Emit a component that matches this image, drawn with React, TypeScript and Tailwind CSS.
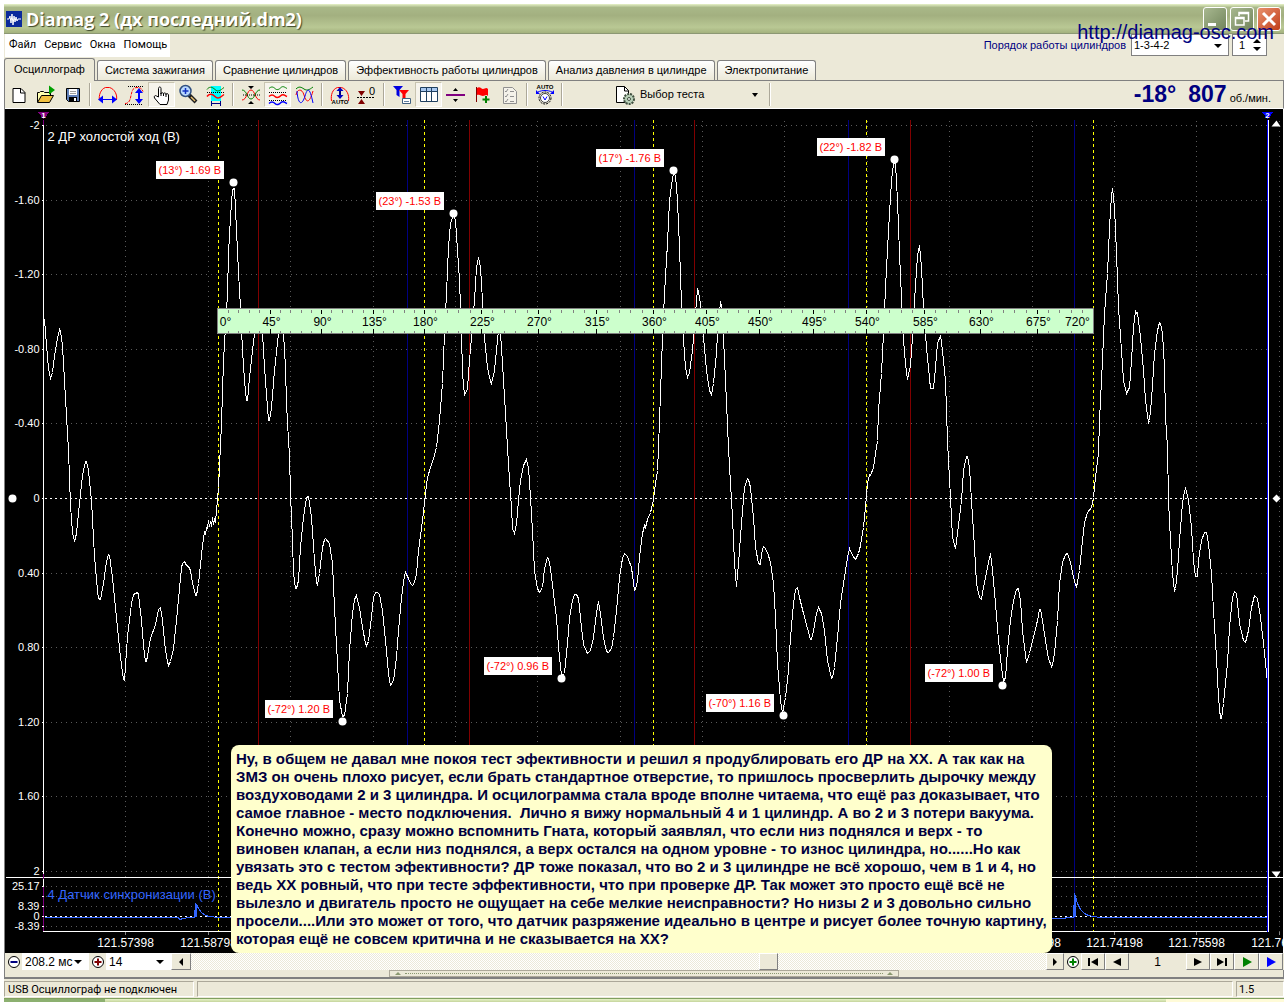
import React, { useState } from 'react';
import type { ReactNode } from 'react';

const TABS = [
  'Осциллограф',
  'Система зажигания',
  'Сравнение цилиндров',
  'Эффективность работы цилиндров',
  'Анализ давления в цилиндре',
  'Электропитание',
];

const MENU = ['Файл', 'Сервис', 'Окна', 'Помощь'];

const NOTE = `Ну, в общем не давал мне покоя тест эфективности и решил я продублировать его ДР на ХХ. А так как на
ЗМЗ он очень плохо рисует, если брать стандартное отверстие, то пришлось просверлить дырочку между
воздуховодами 2 и 3 цилиндра. И осцилограмма стала вроде вполне читаема, что ещё раз доказывает, что
самое главное - место подключения.  Лично я вижу нормальный 4 и 1 цилиндр. А во 2 и 3 потери вакуума.
Конечно можно, сразу можно вспомнить Гната, который заявлял, что если низ поднялся и верх - то
виновен клапан, а если низ поднялся, а верх остался на одном уровне - то износ цилиндра, но......Но как
увязать это с тестом эфективности? ДР тоже показал, что во 2 и 3 цилиндре не всё хорошо, чем в 1 и 4, но
ведь ХХ ровный, что при тесте эффективности, что при проверке ДР. Так может это просто ещё всё не
вылезло и двигатель просто не ощущает на себе мелкие неисправности? Но низы 2 и 3 довольно сильно
просели....Или это может от того, что датчик разряжение идеально в центре и рисует более точную картину,
которая ещё не совсем критична и не сказывается на ХХ?`;

// vacuum sensor trace, channel 2
const VACUUM =
  '44,319 46,345 48,368 50,378 52,372 54,355 57,338 59,329 60,331 62,345 65,398 68,450 70,505 72,532 74,541 76,533 79,503 82,475 85,461 86,461 88,470 91,500 94,556 97,590 98,598 100,599 103,583 106,561 108,554 109,555 112,577 116,617 120,657 122,672 123,679 124,680 127,636 131,603 133,594 137,592 138,594 141,620 143,645 145,661 146,661 150,638 155,624 158,609 160,607 162,620 165,650 167,661 168,665 170,661 173,648 176,620 181,567 182,563 184,561 186,565 188,566 190,570 192,582 195,595 196,595 198,583 202,545 204,531 205,534 206,527 207,528 208,520 209,526 210,521 211,526 212,517 213,524 214,519 215,522 216,510 218,487 221,423 223,360 227,293 228,253 230,217 232,189 234,188 236,230 238,272 240,307 242,350 244,380 246,400 247,400 249,377 252,350 254,333 258,318 262,333 264,367 267,407 268,420 269,420 271,407 274,370 278,333 280,325 283,333 285,367 286,403 288,440 289,455 290,493 292,540 293,573 295,588 296,588 298,580 300,547 303,517 306,497 308,496 311,517 314,560 316,582 317,585 319,573 322,547 324,539 325,538 329,543 332,563 334,607 337,663 339,700 342,716 344,715 347,693 349,650 352,613 354,599 356,595 359,607 362,627 365,643 366,645 368,641 371,617 373,597 375,592 377,592 379,594 382,610 385,640 388,673 390,685 393,680 396,657 398,630 401,597 404,575 405,572 408,578 410,583 412,585 414,582 416,573 418,550 422,520 425,493 427,477 430,467 433,458 436,447 439,420 442,383 444,333 446,293 448,247 450,223 453,214 455,220 457,250 459,280 461,333 462,373 464,395 467,388 469,360 471,337 474,300 476,267 478,257 480,267 482,300 484,337 487,367 490,381 491,383 494,370 497,340 499,320 500,333 502,363 505,413 507,447 509,480 511,507 512,528 514,533 516,523 518,500 520,480 523,465 526,459 528,467 530,497 532,530 534,570 537,588 539,592 542,587 544,568 547,557 548,558 550,568 553,593 556,617 558,647 561,675 564,673 567,643 569,617 572,600 574,594 576,594 578,598 581,627 583,644 587,653 590,650 593,637 596,613 598,601 600,613 603,637 606,651 608,652 611,648 613,637 616,610 619,577 622,558 624,553 627,556 631,567 634,590 635,589 637,580 639,557 642,533 644,525 645,527 647,519 650,512 653,500 654,490 657,470 658,447 660,393 662,337 664,293 667,243 669,200 672,178 673,173 675,175 677,200 679,247 681,303 683,340 685,367 687,377 689,372 692,350 695,313 697,289 698,291 700,303 703,337 706,370 709,390 711,394 713,383 716,353 717,333 720,301 722,310 723,337 725,380 728,447 730,483 732,517 734,563 736,586 738,563 741,523 744,487 747,478 748,479 750,487 753,517 755,547 758,563 760,564 761,553 763,546 764,547 767,552 770,562 773,583 775,617 777,663 780,700 782,713 785,697 788,670 790,637 793,603 795,589 797,587 799,597 803,613 807,628 810,639 811,639 813,630 816,613 818,607 821,613 824,630 827,660 831,678 832,677 834,667 837,637 840,603 843,583 847,557 849,548 852,555 855,559 858,553 860,545 863,527 865,507 867,483 869,474 870,475 873,467 875,453 877,440 878,410 881,373 883,333 885,287 888,230 891,180 893,163 895,163 897,200 899,253 901,297 903,340 905,363 907,379 910,365 912,337 914,300 917,255 919,245 921,267 923,307 926,347 928,367 930,388 933,388 935,367 937,343 940,335 942,350 945,380 947,440 948,460 950,497 952,537 955,548 957,533 961,500 963,470 966,456 967,456 969,467 971,500 974,547 976,583 979,597 981,599 983,587 987,567 990,553 992,570 995,603 998,640 1001,667 1003,681 1005,677 1007,650 1010,620 1013,600 1016,589 1018,588 1020,600 1022,630 1026,662 1029,653 1033,637 1037,620 1039,609 1040,609 1042,620 1045,640 1048,658 1051,666 1052,664 1054,653 1057,620 1059,583 1062,562 1065,554 1067,553 1070,562 1073,577 1076,587 1079,570 1082,540 1084,522 1087,512 1091,507 1093,497 1095,477 1098,453 1099,420 1102,360 1104,313 1107,273 1109,227 1111,195 1112,188 1114,207 1116,253 1118,307 1121,350 1123,380 1126,393 1129,387 1131,360 1133,327 1135,311 1136,313 1137,312 1140,337 1143,370 1145,400 1148,422 1149,420 1151,400 1154,353 1157,330 1159,322 1160,323 1162,333 1164,367 1165,417 1167,447 1168,500 1170,540 1172,573 1174,591 1175,588 1177,570 1179,540 1182,503 1184,491 1185,488 1186,491 1188,500 1191,527 1193,560 1195,576 1197,576 1198,560 1201,540 1204,532 1206,532 1208,543 1211,573 1213,610 1216,657 1218,697 1220,718 1221,718 1223,703 1227,663 1229,627 1232,597 1234,591 1236,593 1237,602 1239,623 1243,640 1245,642 1248,630 1251,607 1254,595 1257,598 1260,617 1263,643 1267,682';

// camshaft sync sensor trace, channel 4
const SYNC =
  '44,917 178,917 179,919 183,918 188,917 194,917 195,903 196,904 198,908 201,912 205,915 209,916 218,917 1046,917 1057,918 1064,918 1066,917 1073,917 1074,893 1075,896 1077,903 1080,909 1084,913 1088,915 1093,916 1100,917 1267,917';

const V_TICKS = [
  ['-2', 125],
  ['-1.60', 200],
  ['-1.20', 274],
  ['-0.80', 349],
  ['-0.40', 423],
  ['0', 498],
  ['0.40', 573],
  ['0.80', 647],
  ['1.20', 722],
  ['1.60', 796],
  ['2', 871],
  ['25.17', 886],
  ['', 896],
  ['8.39', 906],
  ['0', 916],
  ['-8.39', 926],
] as const;

// ticks that the note covers carry no label
const T_TICKS = [
  ['121.57398', 125],
  ['121.58798', 208],
  ['', 290],
  ['', 373],
  ['', 455],
  ['', 537],
  ['', 620],
  ['', 702],
  ['', 784],
  ['', 867],
  ['', 949],
  ['121.72798', 1032],
  ['121.74198', 1114],
  ['121.75598', 1196],
  ['121.76998', 1279],
] as const;

const STROKES = [218, 424, 653, 866, 1093];
const RED_LINES = [258, 469, 694, 910];
const BLUE_LINES = [407, 634, 848, 1074];

const RULER = [217, 270, 321, 373, 424, 481, 538, 596, 653, 706, 759, 813, 866, 924, 980, 1037, 1093];

const PEAKS = [
  { x: 233, y: 182, label: '(13°) -1.69 В' },
  { x: 453, y: 213, label: '(23°) -1.53 В' },
  { x: 673, y: 170, label: '(17°) -1.76 В' },
  { x: 894, y: 159, label: '(22°) -1.82 В' },
  { x: 342, y: 721, label: '(-72°) 1.20 В' },
  { x: 561, y: 678, label: '(-72°) 0.96 В' },
  { x: 783, y: 715, label: '(-70°) 1.16 В' },
  { x: 1002, y: 685, label: '(-72°) 1.00 В' },
];

function Ruler() {
  return (
    <g>
      <rect x="217" y="308" width="876" height="25" fill="#ccffcc" stroke="#808080" />
      {RULER.slice(0, -1).map((x, i) => {
        const step = (RULER[i + 1] - x) / 5;
        return (
          <g key={x}>
            {i > 0 && <path d={`M${x} 309v4M${x} 328v5`} stroke="#000" />}
            {[1, 2, 3, 4].map((n) => {
              const mx = Math.round(x + step * n);
              return <path key={n} d={`M${mx} 309v3M${mx} 330v3`} stroke="#808080" />;
            })}
          </g>
        );
      })}
      {RULER.map((x, i) => (
        <text
          key={x}
          x={i === 0 ? 225 : i === 16 ? 1077 : x + 1}
          y="325"
          textAnchor="middle"
          fontSize="12"
          fill="#000"
        >
          {i * 45}°
        </text>
      ))}
    </g>
  );
}

function Chart() {
  return (
    <svg
      viewBox="5 109 1278 844"
      className="block w-full bg-black"
      fontFamily="'Liberation Sans', Arial, sans-serif"
      shapeRendering="crispEdges"
      role="img"
      aria-label="Осциллограмма"
    >
      <g transform="translate(.5 .5)" fill="none" strokeWidth="1">
        <g stroke="#5a5a5a" strokeDasharray="1 4">
          {V_TICKS.filter(([label]) => label !== '0').map(([, y]) => (
            <path key={y} d={`M45 ${y}H1267`} />
          ))}
          {T_TICKS.map(([, x]) => (
            <path key={x} d={`M${x} 120V931`} />
          ))}
        </g>

        {RED_LINES.map((x) => (
          <path key={x} d={`M${x} 119V931`} stroke="#800000" />
        ))}
        {BLUE_LINES.map((x) => (
          <path key={x} d={`M${x} 119V931`} stroke="#000080" />
        ))}
        {STROKES.map((x) => (
          <path key={x} d={`M${x} 119V931`} stroke="#ffff00" strokeDasharray="3 3" />
        ))}
        <path d="M44 498H1267M44 916H1267" stroke="#fff" strokeDasharray="2 3" />

        <polyline points={VACUUM} stroke="#fff" />
        <polyline points={SYNC} stroke="#3366ff" />
        <path d="M195 905v11M1074 895v21" stroke="#3366ff" strokeWidth="2" />

        <path d="M5 877H1282M43 119V931H1268V119" stroke="#fff" />
        <path d="M1267 119V931" stroke="#0000ff" />
        <path d="M43 119v6M43 873v5M43 886v44" stroke="#800080" />
        {V_TICKS.map(([, y]) => (
          <path key={y} d={`M41 ${y}h2`} stroke="#fff" />
        ))}
        {T_TICKS.map(([, x]) => (
          <path key={x} d={`M${x} 931v3`} stroke="#808080" />
        ))}

        <path d="M37 111h12l-6 8z" fill="#800080" />
        <path d="M1261 111h12l-6 8z" fill="#0000ff" />
        <g fontSize="8" fontWeight="bold" fill="#fff" textAnchor="middle">
          <text x="43" y="117">1</text>
          <text x="1267" y="117">2</text>
        </g>
        <g fill="#fff" shapeRendering="auto">
          <circle cx="12" cy="498" r="4" />
          <path d="M1276 120l4 6h-9z" />
          <path d="M1276 494l4 4-4 4-4-4z" />
          <path d="M1276 877l4-6h-9z" />
        </g>

        <g fontSize="11" fill="#fff" textAnchor="end">
          {V_TICKS.map(([label, y]) => (
            <text key={y} x="39" y={y + 3}>
              {label}
            </text>
          ))}
        </g>
        <g fontSize="12" fill="#fff" textAnchor="middle">
          {T_TICKS.filter(([label]) => label).map(([label, x]) => (
            <text key={x} x={x} y="946">
              {label}
            </text>
          ))}
        </g>
        <text x="47" y="140" fontSize="13" fill="#fff">
          2 ДР холостой ход (В)
        </text>
        <text x="47" y="898" fontSize="13" fill="#3366ff">
          4 Датчик синхронизации (В)
        </text>

        <Ruler />

        {PEAKS.map((p) => (
          <g key={p.label}>
            <circle cx={p.x} cy={p.y} r="4" fill="#fff" shapeRendering="auto" />
            <rect x={p.x - 77} y={p.y - 21} width="67" height="17" fill="#fff" stroke="#fff" />
            <text x={p.x - 75} y={p.y - 9} fontSize="11" fill="#ff0000">
              {p.label}
            </text>
          </g>
        ))}
      </g>
    </svg>
  );
}

function Icon({ children }: { children: ReactNode }) {
  return (
    <svg viewBox="0 0 24 24" className="h-6 w-6" fill="none" aria-hidden="true">
      {children}
    </svg>
  );
}

function ToolButton({ label, pressed, children }: { label: string; pressed?: boolean; children: ReactNode }) {
  return (
    <button
      aria-label={label}
      aria-pressed={pressed}
      className={
        pressed
          ? 'flex h-[25px] w-[27px] justify-center border border-b-white border-l-[#c8c4b0] border-r-white border-t-[#c8c4b0] bg-[#f6f4ec]'
          : 'flex h-[25px] w-[27px] justify-center border border-transparent hover:border-[#aca899]'
      }
    >
      {children}
    </button>
  );
}

function Separator() {
  return <div className="mx-[3px] h-[23px] w-0.5 border-l border-r border-l-[#aca899] border-r-white" />;
}

function Toolbar() {
  return (
    <div className="flex h-[28px] items-center border-b border-r border-b-white border-r-[#808080]">
      <ToolButton label="Новый">
        <Icon>
          <path d="M6 5.5h8l4 4v10H6z" fill="#fff" stroke="#000" />
          <path d="M13.5 5.5V10H18" stroke="#000" />
        </Icon>
      </ToolButton>
      <ToolButton label="Открыть">
        <Icon>
          <path d="M3.5 19V9.5h2l1-1h3l1 1h6v3" fill="#ffffb0" stroke="#000" />
          <path d="M3.5 19.5l4-7h12l-4 7z" fill="#f0c040" stroke="#000" />
          <path d="M15 2.500v9l6-4.500z" fill="#00a000" />
        </Icon>
      </ToolButton>
      <ToolButton label="Сохранить">
        <Icon>
          <path d="M5.5 5.5h13v13h-11l-2-2z" fill="#6080b8" stroke="#000" />
          <path d="M8 6h8v6H8z" fill="#fff" />
          <path d="M9 8.5h6M9 10.5h6" stroke="#a0a0a0" />
          <path d="M8 14h8v4H8z" fill="#000" />
          <path d="M13 15h2v3h-2z" fill="#fff" />
        </Icon>
      </ToolButton>
      <Separator />
      <ToolButton label="Период">
        <Icon>
          <path d="M3.5 17c-1-4 1-11 6-12.500h4c5 1.500 8 7 7 12.500" stroke="#f00" />
          <path d="M4 16.5h16" stroke="#00f" />
          <path d="M2 16.5l5-4v8zM21 16.5l-5-4v8z" fill="#00f" />
        </Icon>
      </ToolButton>
      <ToolButton label="Амплитуда">
        <Icon>
          <path d="M2 20.500c4 0 5-3 6-8s2-8 6-8c3 0 5 1 6 4" stroke="#f00" strokeDasharray="3 1" />
          <path d="M5 3.500h16M2 21.500h18" stroke="#000" strokeDasharray="1 1" />
          <path d="M16 8v10" stroke="#00f" strokeWidth="2" />
          <path d="M16 5l4 5h-8zM16 21l4-5h-8z" fill="#00f" />
        </Icon>
      </ToolButton>
      <ToolButton label="Рука" pressed>
        <Icon>
          <path
            d="M8.500 14V5.500c0-2 2.500-2 2.500 0V11c0-2 2.500-1.500 2.500 0 0-1.500 2.500-1.500 2.500.5 0-1.500 2.500-1 2.500.5V17l-1.500 4.500H10L4.500 15c-1-2 1-3 2-2z"
            fill="#fff"
            stroke="#000"
          />
          <path d="M11 10v3M13.500 11v2M16 11v3" stroke="#000" />
        </Icon>
      </ToolButton>
      <ToolButton label="Масштаб">
        <Icon>
          <path d="M12 12l7 7" stroke="#202020" strokeWidth="4" />
          <path d="M14 14l4 4" stroke="#e8c070" strokeWidth="1.500" />
          <circle cx="8.500" cy="8" r="5.500" fill="#b8d8ff" stroke="#305080" strokeWidth="1.500" />
          <path d="M8.500 5v6M5.500 8h6" stroke="#1030c0" strokeWidth="1.500" />
        </Icon>
      </ToolButton>
      <ToolButton label="Измерение">
        <Icon>
          <path d="M7 3h10v15H7z" fill="#00ffff" />
          <path d="M3 6.500c2-3 5-3 8 0s5 1 9-2" stroke="#008000" />
          <path d="M3 9.500h18" stroke="#000" strokeDasharray="1 1" />
          <path d="M3 13.500c2-3 5-3 8 0s5 1 9-2" stroke="#f00" strokeWidth="1.500" />
          <path d="M8 20.500h8M7.500 18v5M16.500 18v5" stroke="#000080" />
        </Icon>
      </ToolButton>
      <Separator />
      <ToolButton label="Совместить">
        <Icon>
          <path d="M3 17c5 0 5-10 9-10s4 10 9 10" stroke="#f00" />
          <path d="M3 7c5 0 5 9 9 9s4-9 9-9" stroke="#008000" />
          <path d="M4 12h18" stroke="#000" strokeDasharray="1 1" />
          <path d="M9 3h6l-3 3zM9 21h6l-3-3z" fill="#000" />
        </Icon>
      </ToolButton>
      <ToolButton label="Раздельно" pressed>
        <Icon>
          <path d="M3 5.500c2-2 4-2 6 0s4 1 6-1 4 0 6 1" stroke="#008000" />
          <path d="M3 9.500h18M3 17.500h18" stroke="#000" strokeDasharray="1 1" />
          <path d="M3 13.500c2-2 4-2 6 0s4 1 6-1 4 0 6 1" stroke="#f00" strokeWidth="1.500" />
          <path d="M3 20.500c2-2 4-2 6 0s4 1 6-1 4 0 6 1" stroke="#00f" strokeWidth="1.500" />
        </Icon>
      </ToolButton>
      <ToolButton label="Наложить">
        <Icon>
          <path d="M3 6c3-3 5-2 8 0s5 1 9-2" stroke="#008000" />
          <path d="M3 12c1-6 6-7 8 0s5 10 9-4" stroke="#f00" />
          <path d="M4 8c1 14 5 15 8 5s5-7 8 7" stroke="#00f" />
        </Icon>
      </ToolButton>
      <Separator />
      <ToolButton label="Авто масштаб">
        <Icon>
          <path d="M3.500 18c-1-6 1-12 6-13.500h4c5 1.500 8 7 7 13.500" stroke="#f00" />
          <path d="M12 6v8" stroke="#000080" strokeWidth="2" />
          <path d="M12 4l3.500 4h-7zM12 16l3.500-4h-7z" fill="#0000c0" />
          <text x="12" y="21" fontSize="6" fontWeight="bold" textAnchor="middle" fill="#000">AUTO</text>
        </Icon>
      </ToolButton>
      <ToolButton label="Ноль">
        <Icon>
          <path d="M2 14.500h18" stroke="#000" strokeDasharray="2 1" />
          <path d="M3 8h7l-3.500 5zM3 21h7l-3.500-5z" fill="#800000" />
          <text x="17" y="12" fontSize="11" textAnchor="middle" fill="#000">0</text>
        </Icon>
      </ToolButton>
      <Separator />
      <ToolButton label="Фильтр">
        <Icon>
          <path d="M3 3h10L9.500 7v7l-3-2V7z" fill="#0000e0" />
          <path d="M9 7h10l-3.500 4v7l-3-2v-5z" fill="#f00" />
          <path d="M12.500 15.500h8v5h-8z" fill="#fff" stroke="#406080" />
          <path d="M14 18.500h5" stroke="#6080a0" />
        </Icon>
      </ToolButton>
      <ToolButton label="Таблица" pressed>
        <Icon>
          <path d="M3.5 4.5h17v14h-17z" fill="#fff" stroke="#204060" />
          <path d="M4 5h16v3H4z" fill="#a8c8f0" />
          <path d="M4 8.500h16M9.500 5v13M14.500 5v13" stroke="#204060" />
        </Icon>
      </ToolButton>
      <ToolButton label="Линия">
        <Icon>
          <path d="M2 12h19" stroke="#800080" strokeWidth="2" />
          <path d="M9 8h5l-2.500-3zM9 16h5l-2.500 3z" fill="#000" />
        </Icon>
      </ToolButton>
      <ToolButton label="Добавить метку">
        <Icon>
          <path d="M5.500 4v15" stroke="#800000" />
          <path d="M6 5c3-2 4 1 6 1s3-2 5 0v7c-2-2-3 0-5 0s-3-2-6-1z" fill="#f00" />
          <path d="M15 13v7M11.500 16.500h7" stroke="#008000" strokeWidth="2" />
        </Icon>
      </ToolButton>
      <ToolButton label="Отчёт">
        <Icon>
          <path d="M5.500 4.500h9l4 4v12h-13z" fill="#f4f2ea" stroke="#909090" />
          <path d="M7 8l1 1 2-3M7 13l1 1 2-3M7 18l1 1 2-3M12 8.500h4M12 13.500h4M12 18.500h4" stroke="#909090" />
        </Icon>
      </ToolButton>
      <Separator />
      <ToolButton label="Авто напряжение">
        <Icon>
          <text x="12" y="6" fontSize="6" fontWeight="bold" textAnchor="middle" fill="#000">AUTO</text>
          <path d="M5 9c4-2 10-2 14 0" stroke="#00f" />
          <path d="M3 7v4h4zM21 7v4h-4z" fill="#00f" />
          <circle cx="12" cy="15" r="6" stroke="#000" strokeDasharray="2 1" />
          <circle cx="12" cy="15" r="4.500" fill="#fff" stroke="#404040" />
          <path d="M10 13.500l2 3.500 2-3.500" stroke="#00f" />
        </Icon>
      </ToolButton>
      <Separator />
      <button className="ml-[48px] flex h-6 w-[152px] items-center text-[11px]">
        <svg viewBox="0 0 22 22" className="mr-1 h-[22px] w-[22px]" fill="none" aria-hidden="true">
          <path d="M2.5 2.5h8l4 4v12h-12z" fill="#fff" stroke="#000" />
          <path d="M10.5 2.5V7h4" stroke="#000" />
          <circle cx="15" cy="15" r="5" fill="#b8d0b8" stroke="#405040" strokeWidth="2" strokeDasharray="2 1" />
          <circle cx="15" cy="15" r="1.500" fill="#fff" stroke="#405040" />
        </svg>
        <span>Выбор теста</span>
        <svg viewBox="0 0 6 4" className="ml-auto mr-2 h-1 w-1.5" aria-hidden="true">
          <path d="M0 0h6L3 4z" />
        </svg>
      </button>
      <Separator />
      <div className="ml-auto flex items-baseline pr-3 text-[#000080]">
        <span className="text-[23px] font-bold leading-6">-18°</span>
        <span className="ml-3 text-[23px] font-bold leading-6">807</span>
        <span className="ml-[3px] text-[11px] text-black">об./мин.</span>
      </div>
    </div>
  );
}

function Dropdown({ label, value, className }: { label: string; value: string; className: string }) {
  return (
    <div className={`relative bg-white ${className}`}>
      <select
        aria-label={label}
        defaultValue={value}
        className="block h-full w-full appearance-none bg-transparent pl-[3px] text-[12px] leading-none outline-none"
      >
        <option>{value}</option>
      </select>
      <svg
        viewBox="0 0 8 4"
        className="pointer-events-none absolute inset-y-0 right-[7px] my-auto h-1 w-2"
        aria-hidden="true"
      >
        <path d="M0 0h8L4 4z" />
      </svg>
    </div>
  );
}

function NavButton({
  label,
  path,
  color = '#000',
  className = 'w-6',
}: {
  label: string;
  path: string;
  color?: string;
  className?: string;
}) {
  return (
    <button
      aria-label={label}
      className={`flex h-[17px] items-center justify-center border border-b-[#808080] border-l-white border-r-[#808080] border-t-white bg-[#ece9d8] ${className}`}
    >
      <svg viewBox="0 0 12 10" className="h-[10px] w-3" fill={color} aria-hidden="true">
        <path d={path} />
      </svg>
    </button>
  );
}

function ZoomButton({ label, color, plus }: { label: string; color: string; plus?: boolean }) {
  return (
    <button aria-label={label} className="flex h-[17px] w-[17px] items-center justify-center">
      <svg viewBox="0 0 14 14" className="h-[14px] w-[14px]" fill="none" aria-hidden="true">
        <circle cx="7" cy="7" r="5.500" fill="#fff" stroke="#000" />
        <path d={plus ? 'M3.500 7h7M7 3.500v7' : 'M3.500 7h7'} stroke={color} strokeWidth="2" />
      </svg>
    </button>
  );
}

function TimeBar() {
  return (
    <div className="flex h-[17px] items-center pr-px">
      <ZoomButton label="Уменьшить" color="#000080" />
      <Dropdown label="Развёртка" value="208.2 мс" className="h-[17px] w-[67px]" />
      <ZoomButton label="Увеличить" color="#800000" plus />
      <Dropdown label="Масштаб" value="14" className="h-[17px] w-[65px]" />
      <NavButton label="Влево" path="M8 1v8L4 5z" className="w-[20px]" />
      <div className="relative h-[17px] flex-1 bg-[conic-gradient(#fff_25%,#ece9d8_0_50%,#fff_0_75%,#ece9d8_0)] bg-[length:2px_2px]">
        <div className="absolute left-[66.4%] top-0 h-[17px] w-[19px] border border-b-[#808080] border-l-white border-r-[#808080] border-t-white bg-[#ece9d8]" />
      </div>
      <NavButton label="Вправо" path="M4 1v8l4-4z" className="w-[18px]" />
      <ZoomButton label="Добавить" color="#008000" plus />
      <NavButton label="В начало" path="M1 1h2v8H1zM11 1v8L4 5z" />
      <NavButton label="Назад" path="M10 1v8L2 5z" />
      <div className="w-[57px] text-center text-[12px]">1</div>
      <NavButton label="Вперёд" path="M2 1v8l8-4z" />
      <NavButton label="В конец" path="M9 1h2v8H9zM1 1v8l7-4z" />
      <NavButton label="Пуск" path="M2 0v10l9-5z" color="#008000" className="w-[25px]" />
      <NavButton label="Запись" path="M2 0v10l9-5z" color="#0000ff" />
    </div>
  );
}

function App() {
  const [tab, setTab] = useState(0);

  return (
    <div className="bg-white px-1 pt-1 font-['Liberation_Sans',Arial,sans-serif] text-[11px] text-black">
      <div className="relative bg-[#ece9d8]">
        <header className="flex h-[30px] items-center border-b border-[#8c9874] bg-[linear-gradient(#e6f2c8,#a9b888_12%,#a3b080_40%,#b9c894_80%,#a4b27e)] pl-0.5 pr-[3px]">
          <svg viewBox="0 0 16 16" className="h-4 w-4" fill="none" aria-hidden="true">
            <rect width="16" height="16" fill="#0a2a9c" />
            <path d="M1 8h2l1-3 1 7 1-9 1 11 1-9 1 6 1-5 1 4 1-2h3" stroke="#fff" />
          </svg>
          <h1 className="ml-1 font-['Open_Sans','Noto_Sans',sans-serif] text-[18px] font-bold leading-6 text-white [text-shadow:1px_1px_1px_#3c4628]">
            Diamag 2 (дх последний.dm2)
          </h1>
          <div className="ml-auto flex gap-[3px]">
            <button
              aria-label="Свернуть"
              className="h-6 w-6 rounded-[3px] border border-white bg-linear-to-br from-[#a8b890] to-[#72855c]"
            >
              <svg viewBox="0 0 22 22" aria-hidden="true">
                <path d="M4 15h8v3H4z" fill="#fff" />
              </svg>
            </button>
            <button
              aria-label="Восстановить"
              className="h-6 w-6 rounded-[3px] border border-white bg-linear-to-br from-[#a8b890] to-[#72855c]"
            >
              <svg viewBox="0 0 22 22" fill="none" stroke="#fff" aria-hidden="true">
                <path d="M8 8V4.500h9.500V13H14M8 5.500h9" strokeWidth="1.500" />
                <path d="M4.500 9.500H13V17H4.500zM4 10.500h9" strokeWidth="1.500" />
              </svg>
            </button>
            <button
              aria-label="Закрыть"
              className="h-6 w-6 rounded-[3px] border border-white bg-linear-to-br from-[#e8906c] to-[#c03c14]"
            >
              <svg viewBox="0 0 22 22" aria-hidden="true">
                <path d="M5 5l12 12M17 5L5 17" stroke="#fff" strokeWidth="3" />
              </svg>
            </button>
          </div>
        </header>
        <a
          href="http://diamag-osc.com"
          className="absolute right-[10px] top-[16px] z-10 text-[20px] leading-6 text-[#000080]"
        >
          http://diamag-osc.com
        </a>

        <div className="flex h-[25px] items-start justify-between pl-px">
          <nav className="flex h-[23px] w-[165px] items-center gap-2 bg-white pl-1 font-['Roboto','Noto_Sans',sans-serif]">
            {MENU.map((item) => (
              <button key={item}>{item}</button>
            ))}
          </nav>
          <div className="flex items-center pr-[17px]">
            <label htmlFor="order" className="mr-[5px] text-[11px] text-[#000080]">
              Порядок работы цилиндров
            </label>
            <div className="relative h-[22px] w-[98px] border border-[#808080] bg-white">
              <select
                id="order"
                defaultValue="1-3-4-2"
                className="h-full w-full appearance-none bg-transparent pl-0.5 text-[11px] outline-none"
              >
                <option>1-3-4-2</option>
              </select>
              <svg viewBox="0 0 8 4" className="pointer-events-none absolute right-[6px] top-[9px] h-1 w-2" aria-hidden="true">
                <path d="M0 0h8L4 4z" />
              </svg>
            </div>
            <div className="relative ml-[3px] h-[22px] w-[35px] border border-[#808080] bg-white">
              <input aria-label="Цилиндр" defaultValue="1" className="h-full w-full pl-[6px] text-[11px] outline-none" />
              <svg viewBox="0 0 8 12" className="pointer-events-none absolute right-[5px] top-1 h-3 w-2" aria-hidden="true">
                <path d="M0 4h8L4 0zM0 8h8l-4 4z" />
              </svg>
            </div>
          </div>
        </div>

        <div role="tablist" className="flex h-[22px] items-end gap-0.5 border-b border-[#808080]">
          {TABS.map((name, i) => (
            <button
              key={name}
              role="tab"
              aria-selected={tab === i}
              onClick={() => setTab(i)}
              className={
                tab === i
                  ? '-mb-px h-[23px] rounded-t-[3px] border border-b-0 border-[#808080] bg-[#ece9d8] px-[9px] pb-0.5 text-[11px]'
                  : 'h-5 rounded-t-[3px] border border-b-0 border-[#808080] bg-linear-to-b from-white to-[#ece9d8] px-[7px] text-[11px]'
              }
            >
              {name}
            </button>
          ))}
        </div>

        <div className="border-l border-[#808080]">
          <Toolbar />
          <div className="relative border-r border-white">
            <Chart />
            <p className="absolute bottom-0 left-[226px] z-10 whitespace-pre rounded-[8px] bg-[#ffffcc] p-[5px] text-[15px] font-bold leading-[18px] text-[#000040]">
              {NOTE}
            </p>
          </div>
          <TimeBar />
          <div className="flex h-[9px] justify-center border-b-2 border-r border-[#808080] pr-px">
            <div className="flex h-[7px] w-[510px] items-center justify-between border border-[#aca899] px-[5px]">
              <svg viewBox="0 0 6 3" className="h-[3px] w-1.5" fill="#8a9870" aria-hidden="true">
                <path d="M0 3h6L3 0z" />
              </svg>
              <div className="mx-1 flex-1 border-t border-dotted border-[#8a9870]" />
              <svg viewBox="0 0 6 3" className="h-[3px] w-1.5" fill="#8a9870" aria-hidden="true">
                <path d="M0 3h6L3 0z" />
              </svg>
            </div>
          </div>
        </div>

        <footer className="flex h-[19px] gap-[3px] pb-px pt-0.5 font-['Roboto','Noto_Sans',sans-serif] text-[11px] leading-4">
          <div className="w-[190px] border border-b-white border-l-[#aca899] border-r-white border-t-[#aca899] pl-[3px]">
            USB Осциллограф не подключен
          </div>
          <div className="flex-1 border border-b-white border-l-[#aca899] border-r-white border-t-[#aca899]" />
          <div className="w-[48px] border border-b-white border-l-[#aca899] border-r-white border-t-[#aca899] pl-0.5">1.5</div>
        </footer>
        <div className="flex h-1 border-t border-[#80a060]">
          <div className="w-[101px] bg-[#8cb070]" />
          <div className="flex-1 bg-linear-to-b from-[#e8f4c8] to-[#c4d49c]" />
          <div className="w-[118px] bg-[#fffbd8]" />
        </div>
      </div>
    </div>
  );
}

export default App;
